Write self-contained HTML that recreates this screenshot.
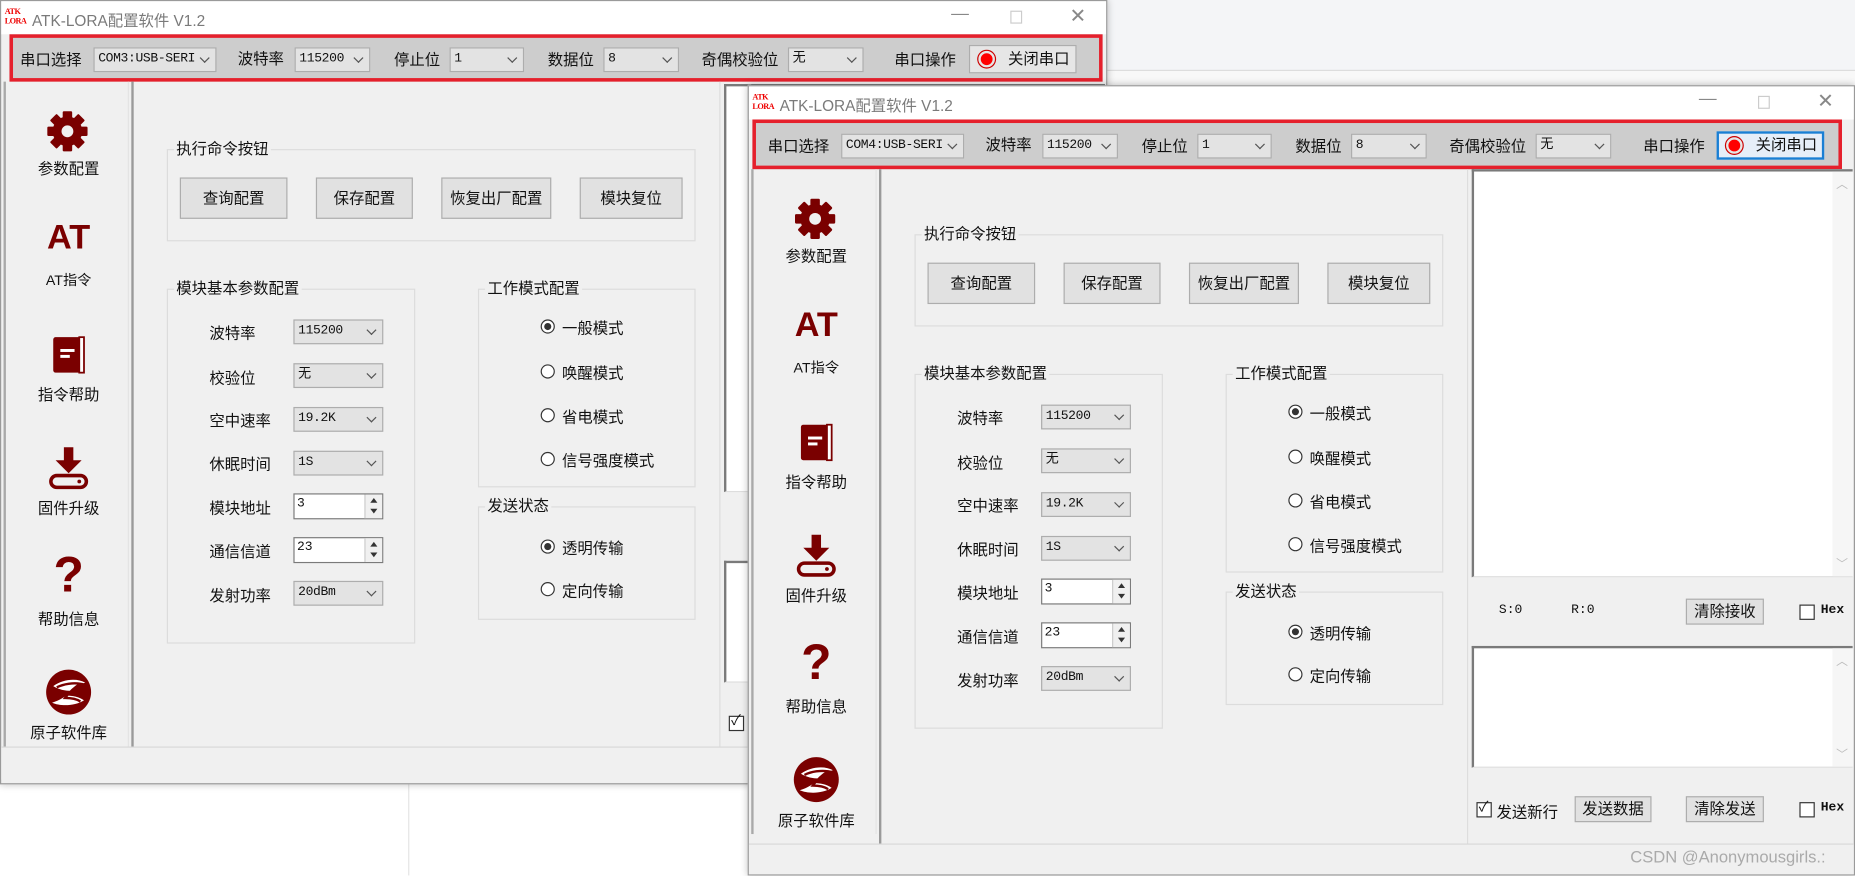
<!DOCTYPE html>
<html><head><meta charset="utf-8">
<style>
*{box-sizing:border-box;margin:0;padding:0}
html,body{width:1855px;height:876px;overflow:hidden;background:#fff}
#root{position:absolute;left:0;top:0;width:1568px;height:740px;transform:scale(1.18304);transform-origin:0 0;font-family:"Liberation Sans","Noto Sans CJK SC",sans-serif;font-size:13px;color:#111}
.a{position:absolute}
.win{position:absolute;width:936px;height:668px;background:#f0f0f0;border:1px solid #9a9a9a;overflow:hidden;box-shadow:0 0 6px rgba(0,0,0,.25)}
.tb{position:absolute;left:0;top:0;width:100%;height:28px;background:#fff}
.ttl{position:absolute;left:26px;top:6px;font-size:13px;color:#7a7a7a}
.logo{position:absolute;left:3px;top:5px;width:18px;height:20px;font-family:"Liberation Serif",serif;font-weight:bold;color:#e00;line-height:8px;font-size:7px;letter-spacing:-0.5px}
.wc{position:absolute;top:4px;color:#888;font-size:15px}
.tool{position:absolute;left:7px;top:28px;width:924px;height:40px;background:#cdcdcd;border:3px solid #e5202c}
.cb{position:absolute;height:21px;background:#e3e3e3;border:1px solid #adadad;font-family:"Liberation Mono","Noto Sans CJK SC",monospace;font-size:11px;line-height:19px;padding-left:3px;white-space:nowrap;overflow:hidden;letter-spacing:-0.3px}
.cb:after{content:"";position:absolute;right:6px;top:5px;width:5px;height:5px;border-right:1px solid #555;border-bottom:1px solid #555;transform:rotate(45deg)}
.lb{position:absolute;font-size:13px;white-space:nowrap}
.btn{position:absolute;background:#e1e1e1;border:1px solid #adadad;text-align:center;font-size:13px}
.grp{position:absolute;border:1px solid #dcdcdc}
.gt{position:absolute;background:#f0f0f0;padding:0 2px;top:-9px;left:5px;font-size:13px;line-height:16px}
.rd{position:absolute;width:12px;height:12px;border:1px solid #333;border-radius:50%;background:#fff}
.rd.on:after{content:"";position:absolute;left:2px;top:2px;width:6px;height:6px;border-radius:50%;background:#333}
.sp{position:absolute;height:22px;background:#fff;border:1px solid #7a7a7a;font-size:11px;padding-left:2px;line-height:16px;font-family:"Liberation Mono",monospace}
.sp i{position:absolute;right:0;top:0;width:15px;height:20px;border-left:1px solid #ccc;background:#f0f0f0}
.sp i:before{content:"";position:absolute;left:4px;top:3px;border:3px solid transparent;border-bottom:4px solid #333;border-top:0}
.sp i:after{content:"";position:absolute;left:4px;top:12px;border:3px solid transparent;border-top:4px solid #333;border-bottom:0}
.side{position:absolute;left:2px;top:68px;width:106px;height:562px;border-left:2px solid #a9a9a9;border-right:1px solid #e4e4e4}
.sl{position:absolute;width:106px;text-align:center;font-size:13px;left:0}
.main{position:absolute;left:110px;top:68px;width:498px;height:562px;border-left:2px solid #9a9a9a;border-right:1px solid #ddd}
.txt{position:absolute;background:#fff;border-top:2px solid #7a7a7a;border-left:2px solid #7a7a7a;border-bottom:1px solid #ddd}
.sb{position:absolute;right:0;top:0;width:17px;height:100%;background:#f6f6f6}
.chk{position:absolute;width:13px;height:13px;border:1px solid #333;background:#fff}
.status{position:absolute;left:0;top:640px;width:100%;height:28px;border-top:1px solid #d8d8d8;background:#f0f0f0}
.ic{color:#7a0000}
</style></head><body><div id="root">
<div class="a" style="left:935px;top:0;width:633px;height:60px;background:#f4f5f7;border-bottom:1px solid #dcdcdc"></div>
<div class="a" style="left:935px;top:60px;width:633px;height:12px;background:#f8f8f8"></div>
<div class="a" style="left:345px;top:662px;width:1px;height:78px;background:#e5e5e5"></div>

<!-- WINDOW 1 -->
<div class="win" style="left:0;top:0;height:663px;width:936px">
 <div class="tb"><div class="logo">ATK<br>LORA</div><div class="ttl">ATK-LORA配置软件 V1.2</div>
 <div class="wc" style="left:803px;top:2px">—</div><div class="wc" style="left:853px;width:10px;height:11px;top:8px;border:1px solid #ccc"></div><div class="wc" style="left:903px;top:3px;font-size:17px">✕</div></div>
 <div class="tool">
  <div class="lb" style="left:6px;top:8px">串口选择</div><div class="cb" style="left:68px;top:8px;width:104px">COM3:USB-SERI</div>
  <div class="lb" style="left:190px;top:7px">波特率</div><div class="cb" style="left:238px;top:8px;width:64px">115200</div>
  <div class="lb" style="left:322px;top:8px">停止位</div><div class="cb" style="left:369px;top:8px;width:63px">1</div>
  <div class="lb" style="left:452px;top:8px">数据位</div><div class="cb" style="left:499px;top:8px;width:64px">8</div>
  <div class="lb" style="left:582px;top:8px">奇偶校验位</div><div class="cb" style="left:655px;top:8px;width:64px">无</div>
  <div class="lb" style="left:745px;top:8px">串口操作</div>
  <div class="btn" style="left:808px;top:6px;width:91px;height:24px;background:#e6e6e6;line-height:21px;text-align:left;padding-left:32px">关闭串口<span class="a" style="left:7px;top:4px;width:14px;height:14px;border-radius:50%;background:#f00;border:2px solid #e6e6e6;box-shadow:0 0 0 1px #c00"></span></div>
 </div>
 <div class="side">
  <svg class="a" style="left:34px;top:24px" width="36" height="36" viewBox="0 0 36 36"><g fill="#7a0000" transform="translate(18 18)"><rect x="-4" y="-17" width="8" height="34" rx="1"/><rect x="-4" y="-17" width="8" height="34" rx="1" transform="rotate(45)"/><rect x="-4" y="-17" width="8" height="34" rx="1" transform="rotate(90)"/><rect x="-4" y="-17" width="8" height="34" rx="1" transform="rotate(135)"/><circle r="12.5"/><circle r="5" fill="#f0f0f0"/></g></svg>
  <div class="sl" style="top:63px">参数配置</div>
  <div class="sl ic" style="top:116px;font-size:29px;font-weight:bold;font-family:'Liberation Sans',sans-serif">AT</div>
  <div class="sl" style="top:159px;font-size:12px">AT指令</div>
  <svg class="a" style="left:37px;top:214px" width="32" height="34" viewBox="0 0 32 34"><rect x="3" y="2" width="24" height="30" rx="2" fill="#7a0000"/><rect x="25" y="2" width="4" height="30" fill="#fff" stroke="#7a0000" stroke-width="1.5"/><rect x="9" y="12" width="12" height="2.5" fill="#fff"/><rect x="9" y="17" width="8" height="2.5" fill="#fff"/></svg>
  <div class="sl" style="top:254px">指令帮助</div>
  <svg class="a" style="left:33px;top:307px" width="40" height="38" viewBox="0 0 40 38"><path d="M16 2h8v11h7L20 24 9 13h7z" fill="#7a0000"/><rect x="5" y="26" width="30" height="10" rx="5" fill="none" stroke="#7a0000" stroke-width="3"/><circle cx="29" cy="31" r="1.6" fill="#7a0000"/></svg>
  <div class="sl" style="top:350px">固件升级</div>
  <div class="sl ic" style="top:395px;font-size:42px;font-weight:bold;line-height:44px">?</div>
  <div class="sl" style="top:444px">帮助信息</div>
  <svg class="a" style="left:33px;top:496px" width="40" height="40" viewBox="0 0 40 40"><circle cx="20" cy="20" r="19" fill="#7a0000"/><path d="M7 15c8-6 20-7 27-3-6 2-12 7-16 11 5 0 11 1 15 4-8 5-20 5-27 2 6-2 12-5 16-10-5 0-10-1-15-4z" fill="#fff"/><path d="M10 16c6-3 14-4 20-3-5 3-10 8-13 12 5 0 10 1 13 3" fill="none" stroke="#7a0000" stroke-width="2"/></svg>
  <div class="sl" style="top:540px">原子软件库</div>
 </div>
 <div class="main"></div>
 <div class="grp" style="left:140px;top:125px;width:447px;height:78px"><div class="gt">执行命令按钮</div></div>
 <div class="btn" style="left:151px;top:149px;width:91px;height:35px;line-height:33px">查询配置</div>
 <div class="btn" style="left:266px;top:149px;width:82px;height:35px;line-height:33px">保存配置</div>
 <div class="btn" style="left:372px;top:149px;width:93px;height:35px;line-height:33px">恢复出厂配置</div>
 <div class="btn" style="left:489px;top:149px;width:87px;height:35px;line-height:33px">模块复位</div>
 <div class="grp" style="left:140px;top:243px;width:210px;height:300px"><div class="gt">模块基本参数配置</div></div>
 <div class="lb" style="left:176px;top:270px">波特率</div><div class="cb" style="left:247px;top:269px;width:76px">115200</div>
 <div class="lb" style="left:176px;top:308px">校验位</div><div class="cb" style="left:247px;top:306px;width:76px">无</div>
 <div class="lb" style="left:176px;top:344px">空中速率</div><div class="cb" style="left:247px;top:343px;width:76px">19.2K</div>
 <div class="lb" style="left:176px;top:381px">休眠时间</div><div class="cb" style="left:247px;top:380px;width:76px">1S</div>
 <div class="lb" style="left:176px;top:418px">模块地址</div><div class="sp" style="left:247px;top:416px;width:76px">3<i></i></div>
 <div class="lb" style="left:176px;top:455px">通信信道</div><div class="sp" style="left:247px;top:453px;width:76px">23<i></i></div>
 <div class="lb" style="left:176px;top:492px">发射功率</div><div class="cb" style="left:247px;top:490px;width:76px">20dBm</div>
 <div class="grp" style="left:403px;top:243px;width:184px;height:168px"><div class="gt">工作模式配置</div></div>
 <div class="rd on" style="left:456px;top:269px"></div><div class="lb" style="left:474px;top:266px">一般模式</div>
 <div class="rd" style="left:456px;top:307px"></div><div class="lb" style="left:474px;top:304px">唤醒模式</div>
 <div class="rd" style="left:456px;top:344px"></div><div class="lb" style="left:474px;top:341px">省电模式</div>
 <div class="rd" style="left:456px;top:381px"></div><div class="lb" style="left:474px;top:378px">信号强度模式</div>
 <div class="grp" style="left:403px;top:427px;width:184px;height:96px"><div class="gt">发送状态</div></div>
 <div class="rd on" style="left:456px;top:455px"></div><div class="lb" style="left:474px;top:452px">透明传输</div>
 <div class="rd" style="left:456px;top:491px"></div><div class="lb" style="left:474px;top:488px">定向传输</div>
 <div class="txt" style="left:611px;top:70px;width:322px;height:345px"></div>
 <div class="txt" style="left:611px;top:473px;width:322px;height:103px"></div>
 <div class="chk" style="left:615px;top:604px"></div><div class="a" style="left:617px;top:599px;font-size:12px">✓</div>
 <div class="a" style="left:631px;top:70px;width:3px;height:570px;background:#999"></div>
 <div class="status" style="top:630px"></div>
</div>

<!-- WINDOW 2 -->
<div class="win" style="left:632px;top:72px">
 <div class="tb"><div class="logo">ATK<br>LORA</div><div class="ttl">ATK-LORA配置软件 V1.2</div>
 <div class="wc" style="left:803px;top:2px">—</div><div class="wc" style="left:853px;width:10px;height:11px;top:8px;border:1px solid #ccc"></div><div class="wc" style="left:903px;top:3px;font-size:17px">✕</div></div>
 <div class="tool" style="left:3px;top:28px;width:921px;height:42px">
  <div class="lb" style="left:10px;top:9px">串口选择</div><div class="cb" style="left:72px;top:9px;width:104px">COM4:USB-SERI</div>
  <div class="lb" style="left:194px;top:8px">波特率</div><div class="cb" style="left:242px;top:9px;width:64px">115200</div>
  <div class="lb" style="left:326px;top:9px">停止位</div><div class="cb" style="left:373px;top:9px;width:63px">1</div>
  <div class="lb" style="left:456px;top:9px">数据位</div><div class="cb" style="left:503px;top:9px;width:64px">8</div>
  <div class="lb" style="left:586px;top:9px">奇偶校验位</div><div class="cb" style="left:659px;top:9px;width:64px">无</div>
  <div class="lb" style="left:750px;top:9px">串口操作</div>
  <div class="btn" style="left:812px;top:7px;width:91px;height:24px;background:#e6eef8;border:2px solid #1a7fd4;line-height:19px;text-align:left;padding-left:31px">关闭串口<span class="a" style="left:6px;top:3px;width:14px;height:14px;border-radius:50%;background:#f00;border:2px solid #e6e6e6;box-shadow:0 0 0 1px #c00"></span></div>
 </div>
 <div class="side" style="top:70px">
  <svg class="a" style="left:34px;top:24px" width="36" height="36" viewBox="0 0 36 36"><g fill="#7a0000" transform="translate(18 18)"><rect x="-4" y="-17" width="8" height="34" rx="1"/><rect x="-4" y="-17" width="8" height="34" rx="1" transform="rotate(45)"/><rect x="-4" y="-17" width="8" height="34" rx="1" transform="rotate(90)"/><rect x="-4" y="-17" width="8" height="34" rx="1" transform="rotate(135)"/><circle r="12.5"/><circle r="5" fill="#f0f0f0"/></g></svg>
  <div class="sl" style="top:63px">参数配置</div>
  <div class="sl ic" style="top:116px;font-size:29px;font-weight:bold">AT</div>
  <div class="sl" style="top:159px;font-size:12px">AT指令</div>
  <svg class="a" style="left:37px;top:214px" width="32" height="34" viewBox="0 0 32 34"><rect x="3" y="2" width="24" height="30" rx="2" fill="#7a0000"/><rect x="25" y="2" width="4" height="30" fill="#fff" stroke="#7a0000" stroke-width="1.5"/><rect x="9" y="12" width="12" height="2.5" fill="#fff"/><rect x="9" y="17" width="8" height="2.5" fill="#fff"/></svg>
  <div class="sl" style="top:254px">指令帮助</div>
  <svg class="a" style="left:33px;top:307px" width="40" height="38" viewBox="0 0 40 38"><path d="M16 2h8v11h7L20 24 9 13h7z" fill="#7a0000"/><rect x="5" y="26" width="30" height="10" rx="5" fill="none" stroke="#7a0000" stroke-width="3"/><circle cx="29" cy="31" r="1.6" fill="#7a0000"/></svg>
  <div class="sl" style="top:350px">固件升级</div>
  <div class="sl ic" style="top:395px;font-size:42px;font-weight:bold;line-height:44px">?</div>
  <div class="sl" style="top:444px">帮助信息</div>
  <svg class="a" style="left:33px;top:496px" width="40" height="40" viewBox="0 0 40 40"><circle cx="20" cy="20" r="19" fill="#7a0000"/><path d="M7 15c8-6 20-7 27-3-6 2-12 7-16 11 5 0 11 1 15 4-8 5-20 5-27 2 6-2 12-5 16-10-5 0-10-1-15-4z" fill="#fff"/><path d="M10 16c6-3 14-4 20-3-5 3-10 8-13 12 5 0 10 1 13 3" fill="none" stroke="#7a0000" stroke-width="2"/></svg>
  <div class="sl" style="top:540px">原子软件库</div>
 </div>
 <div class="main" style="top:70px;height:570px"></div>
 <div class="grp" style="left:140px;top:125px;width:447px;height:78px"><div class="gt">执行命令按钮</div></div>
 <div class="btn" style="left:151px;top:149px;width:91px;height:35px;line-height:33px">查询配置</div>
 <div class="btn" style="left:266px;top:149px;width:82px;height:35px;line-height:33px">保存配置</div>
 <div class="btn" style="left:372px;top:149px;width:93px;height:35px;line-height:33px">恢复出厂配置</div>
 <div class="btn" style="left:489px;top:149px;width:87px;height:35px;line-height:33px">模块复位</div>
 <div class="grp" style="left:140px;top:243px;width:210px;height:300px"><div class="gt">模块基本参数配置</div></div>
 <div class="lb" style="left:176px;top:270px">波特率</div><div class="cb" style="left:247px;top:269px;width:76px">115200</div>
 <div class="lb" style="left:176px;top:308px">校验位</div><div class="cb" style="left:247px;top:306px;width:76px">无</div>
 <div class="lb" style="left:176px;top:344px">空中速率</div><div class="cb" style="left:247px;top:343px;width:76px">19.2K</div>
 <div class="lb" style="left:176px;top:381px">休眠时间</div><div class="cb" style="left:247px;top:380px;width:76px">1S</div>
 <div class="lb" style="left:176px;top:418px">模块地址</div><div class="sp" style="left:247px;top:416px;width:76px">3<i></i></div>
 <div class="lb" style="left:176px;top:455px">通信信道</div><div class="sp" style="left:247px;top:453px;width:76px">23<i></i></div>
 <div class="lb" style="left:176px;top:492px">发射功率</div><div class="cb" style="left:247px;top:490px;width:76px">20dBm</div>
 <div class="grp" style="left:403px;top:243px;width:184px;height:168px"><div class="gt">工作模式配置</div></div>
 <div class="rd on" style="left:456px;top:269px"></div><div class="lb" style="left:474px;top:266px">一般模式</div>
 <div class="rd" style="left:456px;top:307px"></div><div class="lb" style="left:474px;top:304px">唤醒模式</div>
 <div class="rd" style="left:456px;top:344px"></div><div class="lb" style="left:474px;top:341px">省电模式</div>
 <div class="rd" style="left:456px;top:381px"></div><div class="lb" style="left:474px;top:378px">信号强度模式</div>
 <div class="grp" style="left:403px;top:427px;width:184px;height:96px"><div class="gt">发送状态</div></div>
 <div class="rd on" style="left:456px;top:455px"></div><div class="lb" style="left:474px;top:452px">透明传输</div>
 <div class="rd" style="left:456px;top:491px"></div><div class="lb" style="left:474px;top:488px">定向传输</div>
 <div class="txt" style="left:611px;top:70px;width:322px;height:345px"><div class="sb"></div><div class="a" style="right:4px;top:2px;color:#bbb;font-size:10px">︿</div><div class="a" style="right:4px;bottom:4px;color:#bbb;font-size:10px">﹀</div></div>
 <div class="lb" style="left:634px;top:437px;font-family:'Liberation Mono',monospace;font-size:11px">S:0</div>
 <div class="lb" style="left:695px;top:437px;font-family:'Liberation Mono',monospace;font-size:11px">R:0</div>
 <div class="btn" style="left:792px;top:433px;width:66px;height:22px;line-height:20px">清除接收</div>
 <div class="chk" style="left:888px;top:438px"></div><div class="lb" style="left:906px;top:437px;font-family:'Liberation Mono',monospace;font-size:11px;font-weight:bold">Hex</div>
 <div class="txt" style="left:611px;top:473px;width:322px;height:103px"><div class="sb"></div><div class="a" style="right:4px;top:2px;color:#bbb;font-size:10px">︿</div><div class="a" style="right:4px;bottom:4px;color:#bbb;font-size:10px">﹀</div></div>
 <div class="chk" style="left:615px;top:605px"></div><div class="a" style="left:617px;top:600px;font-size:12px">✓</div>
 <div class="lb" style="left:632px;top:603px">发送新行</div>
 <div class="btn" style="left:698px;top:600px;width:65px;height:22px;line-height:20px">发送数据</div>
 <div class="btn" style="left:792px;top:600px;width:66px;height:22px;line-height:20px">清除发送</div>
 <div class="chk" style="left:888px;top:605px"></div><div class="lb" style="left:906px;top:604px;font-family:'Liberation Mono',monospace;font-size:11px;font-weight:bold">Hex</div>
 <div class="status"></div>
 <div class="lb" style="left:745px;top:643px;color:#aaa;font-size:14px">CSDN @Anonymousgirls.:</div>
</div>
</div></body></html>
